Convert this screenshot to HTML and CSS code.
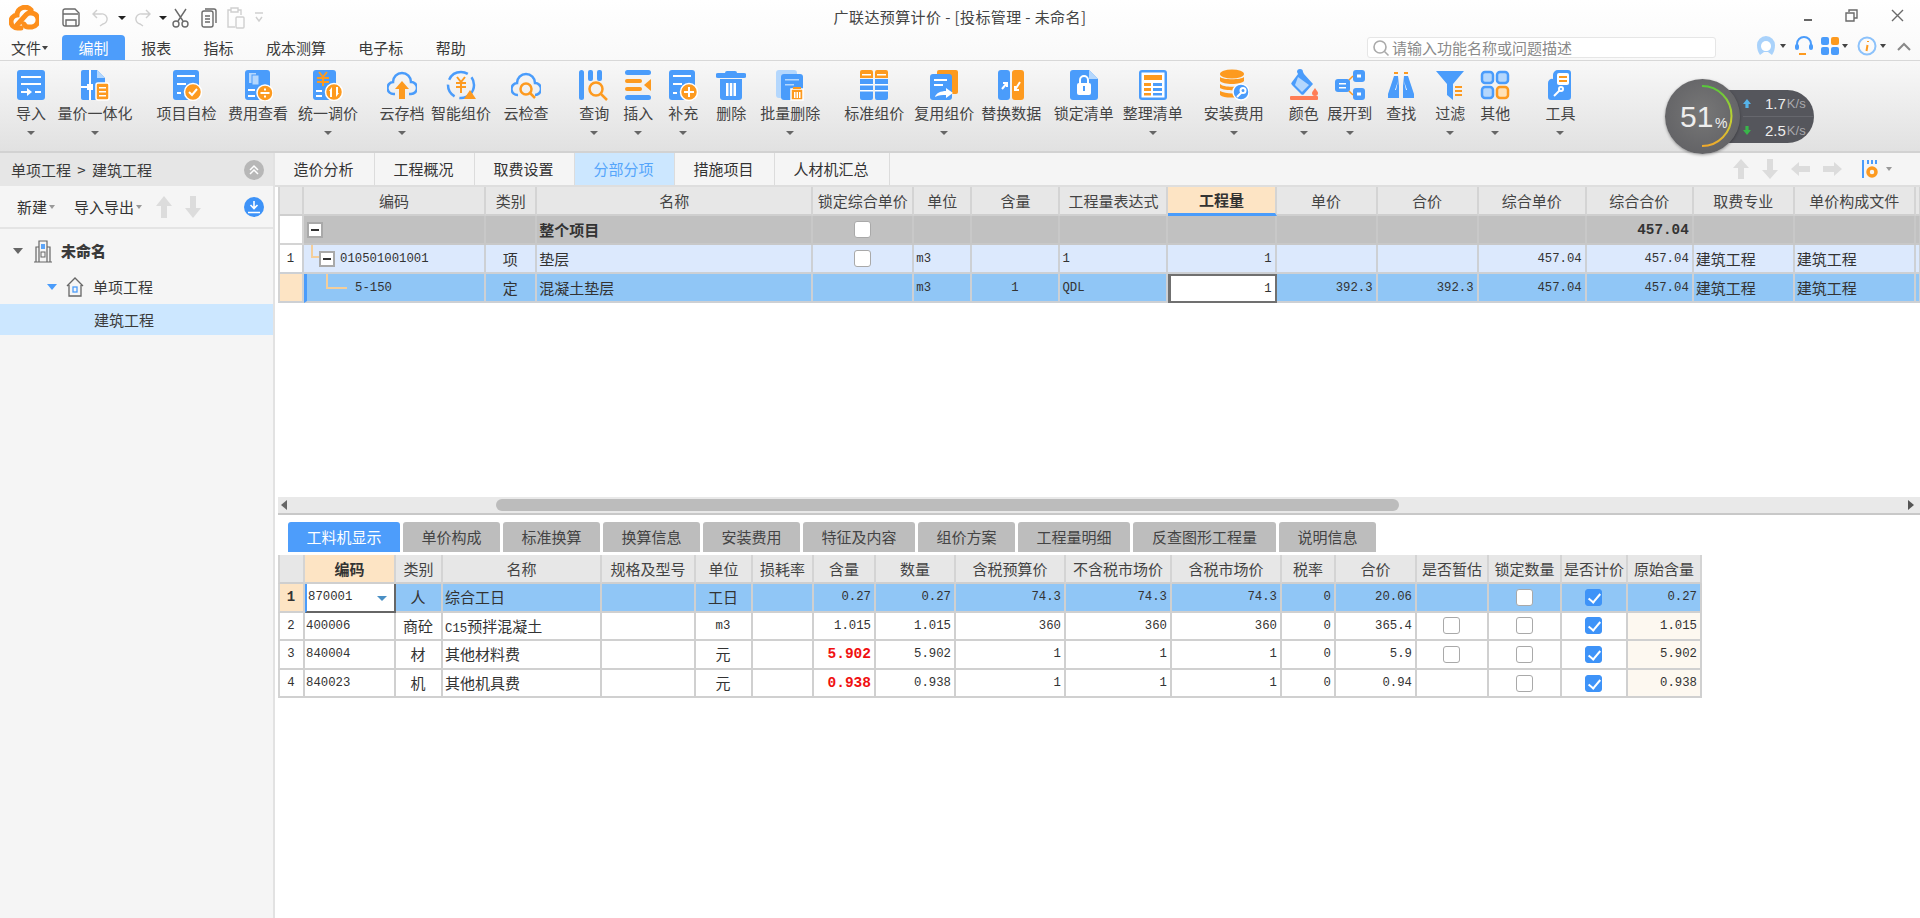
FILE: index.html
```html
<!DOCTYPE html>
<html lang="zh-CN">
<head>
<meta charset="utf-8">
<title>广联达预算计价</title>
<link rel="stylesheet" href="styles.css">
</head>
<body>
<div class="app">
  <header class="top">
    <div class="titlebar">
      <div class="qa">
        <svg class="logo" width="30" height="26" viewBox="0 0 30 26"><path class="lg" d="M12 23H9a6.500 6.500 0 0 1-1-13 8 8 0 0 1 14-5"/><path class="lg" d="M8 20l9-10a5 5 0 0 1 4-2 7 7 0 0 1 2 14h-3a5 5 0 0 1-5-3"/></svg>
        <svg class="qi s1" width="18" height="19" viewBox="0 0 18 19"><path class="ql" d="M3 1h10l4 4v11a2 2 0 0 1-2 2H3a2 2 0 0 1-2-2V3a2 2 0 0 1 2-2z"/><path class="ql" d="M4 18v-6h10v6M1 6h15"/></svg>
        <svg class="qi s2" width="16" height="18" viewBox="0 0 16 18"><path class="qd" d="M5 1L1 5l4 4M1 5h8a5 5 0 0 1 2 10l-3 2"/></svg>
        <i class="mini s3"></i>
        <svg class="qi s4" width="16" height="18" viewBox="0 0 16 18"><path class="qd" d="M11 1l4 4-4 4M15 5H7a5 5 0 0 0-2 10l3 2"/></svg>
        <i class="mini s5"></i>
        <svg class="qi s6" width="17" height="20" viewBox="0 0 17 20"><path class="ql" d="M3 1l8 12M14 1L6 13"/><circle class="ql" cx="4" cy="16" r="3"/><circle class="ql" cx="13" cy="16" r="3"/></svg>
        <svg class="qi s7" width="16" height="20" viewBox="0 0 16 20"><rect class="ql" x="1" y="3" width="11" height="16" rx="2"/><path class="ql" d="M4 1h9a2 2 0 0 1 2 2v12M4 8h5M4 11h5M4 14h5"/></svg>
        <svg class="qi s8" width="20" height="22" viewBox="0 0 20 22"><path class="qd" d="M5 3H2v17h7M12 3h3v5M5 1h7v4H5z"/><rect class="qd" x="10" y="10" width="8" height="11" rx="1"/></svg>
        <svg class="qi s9" width="10" height="14" viewBox="0 0 10 14"><path class="qd" d="M1 2h8M2 6l3 4 3-4"/></svg>
      </div>
      <div class="apptitle">广联达预算计价 - [投标管理 - 未命名]</div>
      <div class="winctl">
        <i class="w-min"></i>
        <svg width="13" height="13" viewBox="0 0 13 13"><path class="ql" d="M4 3V1h8v8h-3M1 4h8v8H1z"/></svg>
        <svg width="13" height="13" viewBox="0 0 13 13"><path class="ql" d="M1 1l11 11M12 1L1 12"/></svg>
      </div>
    </div>
    <nav class="menubar">
      <span class="mi file">文件<i class="mini dark"></i></span>
      <span class="mi active">编制</span>
      <span class="mi">报表</span>
      <span class="mi">指标</span>
      <span class="mi">成本测算</span>
      <span class="mi">电子标</span>
      <span class="mi">帮助</span>
      <div class="search">
        <svg width="18" height="18" viewBox="0 0 18 18"><circle cx="8" cy="8" r="6" fill="none" stroke="#aaa" stroke-width="1.6"/><path d="M12.5 12.5l4 4" stroke="#aaa" stroke-width="1.6"/></svg>
        <span>请输入功能名称或问题描述</span>
      </div>
      <div class="helpicons">
        <svg width="22" height="22" viewBox="0 0 22 22"><path d="M11 1a9 9 0 0 1 9 9c0 4-1 7-3 10l-4-3h-4l-4 3C3 17 2 14 2 10a9 9 0 0 1 9-9z" fill="#a9d2fb"/><path d="M6 11a5 5 0 0 1 10 0c0 3-2 5-5 5s-5-2-5-5z" fill="#fff"/></svg>
        <i class="mini dark"></i>
        <svg class="h2" width="20" height="22" viewBox="0 0 20 22"><path d="M3 12V9a7 7 0 0 1 14 0v3" fill="none" stroke="#4a9cfb" stroke-width="2"/><rect x="1" y="9" width="4" height="6" rx="2" fill="#4a9cfb"/><rect x="15" y="9" width="4" height="6" rx="2" fill="#4a9cfb"/><path d="M5 19h7" stroke="#fd9a1f" stroke-width="2"/></svg>
        <svg class="h3" width="18" height="18" viewBox="0 0 18 18"><rect x="0" y="0" width="8" height="8" rx="2" fill="#4a9cfb"/><rect x="10" y="0" width="8" height="8" rx="2" fill="#fd9a1f"/><rect x="0" y="10" width="8" height="8" rx="2" fill="#4a9cfb"/><rect x="10" y="10" width="8" height="8" rx="2" fill="#4a9cfb"/></svg>
        <i class="mini dark"></i>
        <svg class="h4" width="20" height="20" viewBox="0 0 20 20"><circle cx="10" cy="10" r="8.5" fill="none" stroke="#8cc2fb" stroke-width="2"/><path d="M11 5v1M10.500 9l-1 6" stroke="#fd9a1f" stroke-width="2"/></svg>
        <i class="mini dark"></i>
        <svg class="h5" width="14" height="9" viewBox="0 0 14 9"><path d="M1 8l6-6 6 6" fill="none" stroke="#888" stroke-width="2"/></svg>
      </div>
    </nav>
  </header>

  <section class="ribbon">
    <div class="rb g16"><svg class="ic" viewBox="0 0 30 32"><rect class="b" x="1" y="1" width="28" height="30" rx="3"/><path class="w" d="M5 7h20v2H5zM5 14h20v2H5zM5 22h6v-3l5 4-5 4v-3H5zM19 22h6v2h-6z"/></svg><span class="rl">导入</span><i class="cr"></i></div>
    <div class="rb g12"><svg class="ic" viewBox="0 0 30 32"><path class="b" d="M3 1h14l8 8v22H3a2 2 0 0 1-2-2V3a2 2 0 0 1 2-2z"/><path class="lb" d="M17 1l8 8h-8z"/><path class="w" d="M9 1h2v14H9zM9 21h2v10H9zM1 17h6v2H1z"/><rect class="w" x="7" y="15" width="6" height="6"/><rect class="o ow" x="16" y="14" width="13" height="17" rx="2"/><path class="w" d="M19 18h7v1.500h-7zM19 22h7v1.500h-7zM19 26h7v1.500h-7z"/></svg><span class="rl">量价一体化</span><i class="cr"></i></div>
    <div class="rb g24"><svg class="ic" viewBox="0 0 30 32"><rect class="b" x="1" y="1" width="26" height="30" rx="3"/><path class="w" d="M5 6h18v2H5zM5 14h9v2H5zM5 23h4v2H5z"/><circle class="o ow" cx="21" cy="23" r="8.500"/><path class="sw" d="M17 23l3 3 5-6"/></svg><span class="rl">项目自检</span></div>
    <div class="rb g12"><svg class="ic" viewBox="0 0 30 32"><rect class="b" x="2" y="1" width="25" height="30" rx="3"/><rect class="lb" x="6" y="4" width="7" height="10"/><rect class="lb ow1" x="9" y="6" width="7" height="10"/><path class="w" d="M5 20h7v2H5zM5 26h7v2H5z"/><circle class="o ow" cx="22" cy="24" r="8"/><path class="w" d="M17.500 23h9v2h-9zM21 19.500h2v2h-2zM21 26.500h2v2h-2z"/></svg><span class="rl">费用查看</span></div>
    <div class="rb g10"><svg class="ic" viewBox="0 0 30 32"><rect class="b" x="0" y="1" width="23" height="30" rx="3"/><path class="so thin" d="M6 3l4 5 4-5M4 9h12M4 13h12M10 8v9"/><path class="w" d="M3 21h6v2H3zM3 26h6v2H3z"/><circle class="o ow" cx="21" cy="23" r="8.500"/><path class="w" d="M19 18v10h-2v-6h-1zM23 28V18h2v6h1z"/></svg><span class="rl">统一调价</span><i class="cr"></i></div>
    <div class="rb g22"><svg class="ic" viewBox="0 0 30 32"><path class="sb" d="M8 25H7a6 6 0 0 1-1-12 9 9 0 0 1 18 0 6 6 0 0 1 0 12h-2"/><path class="o" d="M15 12l7 8h-4v10h-6V20H8z"/></svg><span class="rl">云存档</span><i class="cr"></i></div>
    <div class="rb g6"><svg class="ic" viewBox="0 0 30 32"><circle class="sb dash" cx="15" cy="16" r="13"/><path class="so thin" d="M11 8l4 5 4-5M10 14h10M10 18h10M15 13v11"/><path class="o" d="M24 21l6 9H18z"/></svg><span class="rl">智能组价</span></div>
    <div class="rb g13"><svg class="ic" viewBox="0 0 30 32"><path class="sb" d="M7 26a6 6 0 0 1-1-12 9 9 0 0 1 18 0 6 6 0 0 1 0 12"/><circle class="so" cx="15" cy="20" r="5.500"/><path class="so" d="M19 24l5 5"/></svg><span class="rl">云检查</span></div>
    <div class="rb g30"><svg class="ic" viewBox="0 0 30 32"><rect class="b" x="0" y="1" width="5" height="30" rx="2.500"/><rect class="b" x="9" y="1" width="5" height="11" rx="2"/><rect class="b" x="18" y="1" width="5" height="11" rx="2"/><circle class="so" cx="17" cy="20" r="6.500"/><path class="so" d="M22 25l6 6"/></svg><span class="rl">查询</span><i class="cr"></i></div>
    <div class="rb g14"><svg class="ic" viewBox="0 0 30 32"><rect class="b" x="2" y="1" width="26" height="5" rx="2.500"/><rect class="o" x="2" y="10" width="17" height="4" rx="2"/><rect class="o" x="2" y="18" width="17" height="4" rx="2"/><path class="o" d="M28 10v12l-7-6z"/><rect class="b" x="2" y="26" width="26" height="5" rx="2.500"/></svg><span class="rl">插入</span><i class="cr"></i></div>
    <div class="rb g15"><svg class="ic" viewBox="0 0 30 32"><rect class="b" x="1" y="1" width="26" height="30" rx="3"/><path class="w" d="M5 6h18v2H5zM5 14h9v2H5zM5 23h4v2H5z"/><circle class="o ow" cx="21" cy="23" r="8.500"/><path class="w" d="M20 18h2v4h4v2h-4v4h-2v-4h-4v-2h4z"/></svg><span class="rl">补充</span><i class="cr"></i></div>
    <div class="rb g18"><svg class="ic" viewBox="0 0 30 32"><path class="b" d="M11 2h8a2 2 0 0 1 2 2h7a1.500 1.500 0 0 1 0 5H2a1.500 1.500 0 0 1 0-5h7a2 2 0 0 1 2-2z"/><path class="b" d="M4 10h22v18a3 3 0 0 1-3 3H7a3 3 0 0 1-3-3z"/><path class="w" d="M10 14h2.500v13H10zM13.800 14h2.500v13h-2.500zM17.500 14H20v13h-2.500z"/></svg><span class="rl">删除</span></div>
    <div class="rb g14"><svg class="ic" viewBox="0 0 30 32"><rect class="lb" x="1" y="1" width="21" height="28" rx="3"/><path class="b" d="M9 5h16a3 3 0 0 1 3 3v23H9a3 3 0 0 1-3-3V8a3 3 0 0 1 3-3z"/><path class="lb" d="M10 10h14v1.500H10zM10 15h9v1.500h-9z"/><path class="o ow" d="M16 20h12v11H16z"/><path class="o" d="M18 18h8v2h-8z"/><path class="w" d="M19 23h1.500v6H19zM21.500 23H23v6h-1.500zM24 23h1.500v6H24z"/></svg><span class="rl">批量删除</span><i class="cr"></i></div>
    <div class="rb g24"><svg class="ic" viewBox="0 0 30 32"><path class="o" d="M3 1h9a2 2 0 0 1 2 2v6H1V3a2 2 0 0 1 2-2zM18 1h9a2 2 0 0 1 2 2v6H16V3a2 2 0 0 1 2-2z"/><path class="b" d="M1 10h13v19a2 2 0 0 1-2 2H3a2 2 0 0 1-2-2zM16 10h13v19a2 2 0 0 1-2 2h-9a2 2 0 0 1-2-2z"/><path class="w" d="M3 5h9v1.500H3zM18 5h9v1.500h-9zM1 15h13v1.500H1zM16 15h13v1.500H16zM1 21h13v1.500H1zM16 21h13v1.500H16z"/></svg><span class="rl">标准组价</span></div>
    <div class="rb g10"><svg class="ic" viewBox="0 0 30 32"><rect class="o" x="8" y="1" width="21" height="24" rx="2"/><rect class="b" x="1" y="5" width="22" height="26" rx="3"/><path class="w" d="M5 10h13v2H5zM5 15h9v2H5z"/><path class="w" d="M6 28c1-4 6-6 11-6v-3l7 5-7 5v-3c-4 0-7 0-11 2z"/></svg><span class="rl">复用组价</span><i class="cr"></i></div>
    <div class="rb g7"><svg class="ic" viewBox="0 0 30 32"><rect class="b" x="2" y="1" width="12" height="30" rx="3"/><rect class="o" x="16" y="1" width="12" height="30" rx="3"/><path class="sw" d="M6 20l5-6M7 14h4v4"/><path class="sw" d="M24 13l-5 8M23 21h-4v-4"/></svg><span class="rl">替换数据</span></div>
    <div class="rb g13"><svg class="ic" viewBox="0 0 30 32"><path class="b" d="M4 1h16l9 9v18a3 3 0 0 1-3 3H4a3 3 0 0 1-3-3V4a3 3 0 0 1 3-3z"/><path class="lb" d="M20 1l9 9h-9z"/><rect class="w" x="8" y="14" width="14" height="12" rx="2"/><path class="sw" d="M11 14v-3a4 4 0 0 1 8 0v3"/><rect class="b" x="14" y="17" width="2" height="5"/></svg><span class="rl">锁定清单</span></div>
    <div class="rb g9"><svg class="ic" viewBox="0 0 30 32"><rect class="b" x="1" y="1" width="28" height="30" rx="3"/><rect class="w" x="3.500" y="3.500" width="23" height="25"/><rect class="o" x="6" y="6" width="18" height="5"/><path class="o" d="M6 14h7v3H6zM6 19h7v3H6zM6 24h7v2.500H6z"/><path class="b" d="M15 14h9v3h-9zM15 19h9v3h-9zM15 24h9v2.500h-9z"/></svg><span class="rl">整理清单</span><i class="cr"></i></div>
    <div class="rb g21"><svg class="ic" viewBox="0 0 30 32"><ellipse class="o" cx="13" cy="5" rx="12" ry="4.500"/><path class="o" d="M1 8c3 3 21 3 24 0v4c-3 4-21 4-24 0zM1 15c3 3 16 4 20 1l-1 5c-6 1-16 0-19-2zM1 22c4 2 11 3 17 2l2 4c-7 1-16 1-19-2z"/><circle class="b ow" cx="22" cy="23" r="8"/><path class="sw" d="M18 28l5-5"/><circle class="sw" cx="24" cy="21.500" r="2.500"/></svg><span class="rl">安装费用</span><i class="cr"></i></div>
    <div class="rb g25"><svg class="ic" viewBox="0 0 30 32"><path class="b" d="M9 5l-1-2a3 3 0 0 1 6 0l1 2 9 10-9 10a2 2 0 0 1-3 0L3 16a2 2 0 0 1 0-3z"/><path class="lb" d="M9 8l11 8-7 7-7-7z"/><path class="rd" d="M26 19c2 3 3 4 3 5a3 3 0 0 1-6 0c0-1 1-2 3-5z"/><rect class="rd" x="1" y="27" width="28" height="4" rx="1"/></svg><span class="rl">颜色</span><i class="cr"></i></div>
    <div class="rb g8"><svg class="ic" viewBox="0 0 30 32"><rect class="b" x="0" y="10" width="15" height="13" rx="3"/><path class="w" d="M4 14h7v1.500H4zM4 18h7v1.500H4z"/><rect class="b" x="18" y="1" width="12" height="12" rx="3"/><rect class="b" x="18" y="19" width="12" height="12" rx="3"/><rect class="w" x="22" y="5.500" width="4" height="3"/><rect class="w" x="22" y="23.500" width="4" height="3"/><path class="so th" d="M14 11l4-4M14 22l4 4"/></svg><span class="rl">展开到</span><i class="cr"></i></div>
    <div class="rb g14"><svg class="ic" viewBox="0 0 30 32"><path class="o" d="M8 3h4v2H8zM18 3h4v2h-4z"/><path class="b" d="M8 7h4l1 10v12H2v-4zM18 7h4l6 18v4H17V17z"/><path class="w" d="M12 12l-2 9h-1zM18 12l2 9h1z"/></svg><span class="rl">查找</span></div>
    <div class="rb g19"><svg class="ic" viewBox="0 0 30 32"><path class="b" d="M1 2h28L18 15v16l-6-5V15z"/><path class="o" d="M20 17h7v2h-7zM20 21h7v2h-7zM20 25h7v2h-7z"/></svg><span class="rl">过滤</span><i class="cr"></i></div>
    <div class="rb g15"><svg class="ic" viewBox="0 0 30 32"><rect class="lb sb2" x="2" y="3" width="11" height="11" rx="3"/><rect class="lb sb2" x="17" y="3" width="11" height="11" rx="3"/><rect class="lb sb2" x="2" y="18" width="11" height="11" rx="3"/><rect class="lo so2" x="17" y="18" width="11" height="11" rx="3"/></svg><span class="rl">其他</span><i class="cr"></i></div>
    <div class="rb g35"><svg class="ic" viewBox="0 0 30 32"><path class="b" d="M8 6a5 5 0 0 1 5-5h10a3 3 0 0 1 3 3v24a3 3 0 0 1-3 3H6a3 3 0 0 1-3-3V14a4 4 0 0 1 5-4z"/><rect class="w" x="12" y="4" width="12" height="12" rx="2"/><path class="o" d="M14 7h8v2h-8zM14 11h8v2h-8z"/><path class="sw" d="M9 27l6-6"/><circle class="sw" cx="16" cy="20" r="2"/></svg><span class="rl">工具</span><i class="cr"></i></div>

    <div class="speed">
      <div class="pill">
        <div class="sp-row"><svg width="8" height="9" viewBox="0 0 10 11"><path d="M5 0l5 6H7v5H3V6H0z" fill="#56b4ea"/></svg><b>1.7</b><em>K/s</em></div>
        <div class="sp-row"><svg width="8" height="9" viewBox="0 0 10 11"><path d="M5 11L0 5h3V0h4v5h3z" fill="#39b54a"/></svg><b>2.5</b><em>K/s</em></div>
      </div>
      <div class="dial">
        <svg class="arc" width="74" height="74" viewBox="0 0 74 74"><defs><linearGradient id="ga" x1="0" y1="0" x2="0" y2="1"><stop offset="0" stop-color="#57c83a"/><stop offset=".55" stop-color="#c4d232"/><stop offset="1" stop-color="#efa92c"/></linearGradient></defs><path d="M37 7a29.500 30 0 0 1 0 60" fill="none" stroke="url(#ga)" stroke-width="2"/></svg>
        <span class="pct">51</span><span class="pc">%</span>
      </div>
    </div>
  </section>

  <div class="main">
    <aside class="side">
      <div class="side-head"><span class="crumb">单项工程 &gt; 建筑工程</span><span class="circ grey"><svg width="12" height="12" viewBox="0 0 12 12"><path d="M2 6l4-4 4 4M2 10l4-4 4 4" fill="none" stroke="#fff" stroke-width="1.500"/></svg></span></div>
      <div class="side-tools">
        <span class="st">新建<i class="mini grey-m"></i></span>
        <span class="st st2">导入导出<i class="mini grey-m"></i></span>
        <svg class="arrow a1" width="16" height="22" viewBox="0 0 16 22"><path class="lt" d="M8 0l8 10h-5v12H5V10H0z"/></svg>
        <svg class="arrow a2" width="16" height="22" viewBox="0 0 16 22"><path class="lt" d="M8 22L0 12h5V0h6v12h5z"/></svg>
        <span class="circ blue"><svg width="14" height="14" viewBox="0 0 14 14"><path d="M7 1v7M3.500 5L7 8.500 10.500 5M1 12.500h12" fill="none" stroke="#fff" stroke-width="1.600"/></svg></span>
      </div>
      <div class="tree">
        <div class="tn root"><i class="tri dk"></i><svg width="20" height="24" viewBox="0 0 20 24"><path d="M1 23h18M3 23V8h3M17 23V8h-3M6 23V2h8v21" fill="none" stroke="#666" stroke-width="1.200"/><rect x="8" y="5" width="4" height="5" fill="#5ba4f8"/><rect x="8" y="13" width="4" height="5" fill="none" stroke="#666"/></svg><b>未命名</b></div>
        <div class="tn lvl1"><i class="tri bl"></i><svg width="18" height="20" viewBox="0 0 18 20"><path d="M1 9l8-8 8 8M3 8v11h12V8" fill="none" stroke="#666" stroke-width="1.300"/><rect x="7" y="10" width="4" height="5" fill="none" stroke="#4a9cfb" stroke-width="1.300"/></svg><span>单项工程</span></div>
        <div class="tn lvl2"><span>建筑工程</span></div>
      </div>
    </aside>

    <div class="content">
      <div class="tabs">
        <span class="tab">造价分析</span><span class="tab">工程概况</span><span class="tab">取费设置</span><span class="tab on">分部分项</span><span class="tab">措施项目</span><span class="tab wide">人材机汇总</span>
        <div class="tab-tools">
          <svg width="16" height="20" viewBox="0 0 16 20"><path class="lt" d="M8 0l8 9h-5v11H5V9H0z"/></svg>
          <svg width="16" height="20" viewBox="0 0 16 20"><path class="lt" d="M8 20L0 11h5V0h6v11h5z"/></svg>
          <svg width="19" height="14" viewBox="0 0 19 14"><path class="lt" d="M0 7l8-7v4h11v6H8v4z"/></svg>
          <svg width="19" height="14" viewBox="0 0 19 14"><path class="lt" d="M19 7l-8-7v4H0v6h11v4z"/></svg>
          <svg class="gear" width="20" height="20" viewBox="0 0 20 20"><path d="M1 1h2v18H1z" fill="#4a9cfb"/><path d="M6 1h2v4H6zM10 1h2v4h-2zM14 1h2v4h-2z" fill="#4a9cfb"/><circle cx="11" cy="13" r="4" fill="none" stroke="#fd9a1f" stroke-width="3.500"/></svg>
          <i class="mini grey-m"></i>
        </div>
      </div>

      <div class="upper">
        <table class="grid gt">
          <colgroup><col class="c26"><col class="c182"><col class="c51"><col class="c276"><col class="c101"><col class="c58"><col class="c88"><col class="c108"><col class="c108"><col class="c101"><col class="c101"><col class="c108"><col class="c107"><col class="c101"><col class="c121"><col class="c5"></colgroup>
          <thead><tr><th></th><th>编码</th><th>类别</th><th>名称</th><th>锁定综合单价</th><th>单位</th><th>含量</th><th>工程量表达式</th><th class="hot line">工程量</th><th>单价</th><th>合价</th><th>综合单价</th><th>综合合价</th><th>取费专业</th><th>单价构成文件</th><th></th></tr></thead>
          <tbody>
            <tr class="r-all"><td class="no"></td><td><span class="treecell"><i class="box"></i></span></td><td></td><td class="t"><b>整个项目</b></td><td class="ctr"><i class="chk"></i></td><td></td><td></td><td></td><td></td><td></td><td></td><td></td><td class="num bold">457.04</td><td></td><td></td><td></td></tr>
            <tr class="r-item"><td class="no">1</td><td><span class="treecell l1"><i class="link lk1"></i><i class="box"></i>010501001001</span></td><td class="ctr t">项</td><td class="t">垫层</td><td class="ctr"><i class="chk"></i></td><td>m3</td><td></td><td>1</td><td class="num">1</td><td></td><td></td><td class="num">457.04</td><td class="num">457.04</td><td class="t">建筑工程</td><td class="t">建筑工程</td><td></td></tr>
            <tr class="r-sel"><td class="no cur"></td><td class="mark"><span class="treecell l2"><i class="link lk2"></i>5-150</span></td><td class="ctr t">定</td><td class="t">混凝土垫层</td><td></td><td>m3</td><td class="ctr">1</td><td>QDL</td><td class="num edit">1</td><td class="num">392.3</td><td class="num">392.3</td><td class="num">457.04</td><td class="num">457.04</td><td class="t">建筑工程</td><td class="t">建筑工程</td><td></td></tr>
          </tbody>
        </table>
      </div>
      <div class="hscroll"><i class="sa left"></i><div class="thumb"></div><i class="sa right"></i></div>

      <div class="lower">
        <div class="btabs">
          <span class="bt on w112">工料机显示</span><span class="bt">单价构成</span><span class="bt">标准换算</span><span class="bt">换算信息</span><span class="bt">安装费用</span><span class="bt w112">特征及内容</span><span class="bt">组价方案</span><span class="bt w112">工程量明细</span><span class="bt w143">反查图形工程量</span><span class="bt">说明信息</span>
        </div>
        <table class="grid gb">
          <colgroup><col class="c27"><col class="c91"><col class="c47"><col class="c159"><col class="c94"><col class="c57"><col class="c61"><col class="c62"><col class="c80"><col class="c110"><col class="c106"><col class="c110"><col class="c54"><col class="c81"><col class="c72"><col class="c73"><col class="c66"><col class="c74"></colgroup>
          <thead><tr><th></th><th class="hot">编码</th><th>类别</th><th>名称</th><th>规格及型号</th><th>单位</th><th>损耗率</th><th>含量</th><th>数量</th><th>含税预算价</th><th>不含税市场价</th><th>含税市场价</th><th>税率</th><th>合价</th><th>是否暂估</th><th>锁定数量</th><th>是否计价</th><th>原始含量</th></tr></thead>
          <tbody>
            <tr class="r-sel"><td class="no cur strong">1</td><td class="edit2">870001<i class="dd"></i></td><td class="ctr t">人</td><td class="t">综合工日</td><td></td><td class="ctr t">工日</td><td></td><td class="num">0.27</td><td class="num">0.27</td><td class="num">74.3</td><td class="num">74.3</td><td class="num">74.3</td><td class="num">0</td><td class="num">20.06</td><td></td><td class="ctr"><i class="chk"></i></td><td class="ctr"><i class="chk on"></i></td><td class="num">0.27</td></tr>
            <tr><td class="no">2</td><td>400006</td><td class="ctr t">商砼</td><td class="t"><span class="m">C15</span>预拌混凝土</td><td></td><td class="ctr">m3</td><td></td><td class="num">1.015</td><td class="num">1.015</td><td class="num">360</td><td class="num">360</td><td class="num">360</td><td class="num">0</td><td class="num">365.4</td><td class="ctr"><i class="chk"></i></td><td class="ctr"><i class="chk"></i></td><td class="ctr"><i class="chk on"></i></td><td class="num cream">1.015</td></tr>
            <tr><td class="no">3</td><td>840004</td><td class="ctr t">材</td><td class="t">其他材料费</td><td></td><td class="ctr t">元</td><td></td><td class="num red">5.902</td><td class="num">5.902</td><td class="num">1</td><td class="num">1</td><td class="num">1</td><td class="num">0</td><td class="num">5.9</td><td class="ctr"><i class="chk"></i></td><td class="ctr"><i class="chk"></i></td><td class="ctr"><i class="chk on"></i></td><td class="num cream">5.902</td></tr>
            <tr><td class="no">4</td><td>840023</td><td class="ctr t">机</td><td class="t">其他机具费</td><td></td><td class="ctr t">元</td><td></td><td class="num red">0.938</td><td class="num">0.938</td><td class="num">1</td><td class="num">1</td><td class="num">1</td><td class="num">0</td><td class="num">0.94</td><td></td><td class="ctr"><i class="chk"></i></td><td class="ctr"><i class="chk on"></i></td><td class="num cream">0.938</td></tr>
          </tbody>
        </table>
      </div>
    </div>
  </div>
</div>
</body>
</html>
```

FILE: styles.css
```css
* { box-sizing: border-box; }
html, body { margin: 0; padding: 0; height: 100%; overflow: hidden; }
body { font: 15px/20px "Noto Sans CJK SC", "Noto Sans", sans-serif; color: #3a3a3a; background: #fff; }
i { display: block; font-style: normal; }
.app { width: 1920px; height: 918px; display: flex; flex-direction: column; overflow: hidden; }

/* title and menu */
.top { height: 61px; background: linear-gradient(#fff, #f9f9f9); border-bottom: 1px solid #d8d8d8; flex: none; }
.titlebar { height: 35px; display: grid; grid-template-columns: 1fr auto 1fr; align-items: center; }
.qa { display: flex; align-items: center; height: 35px; padding-left: 9px; }
.lg { fill: none; stroke: #fd8f1c; stroke-width: 5; stroke-linecap: round; }
.ql, .qd { fill: none; stroke-width: 1.4; }
.ql { stroke: #6a6a6a; }
.qd { stroke: #cfcfcf; }
.s1 { margin-left: 23px; }
.s2 { margin-left: 12px; }
.s3 { margin-left: 10px; }
.s4 { margin-left: 9px; }
.s5 { margin-left: 8px; }
.s6 { margin-left: 5px; }
.s7 { margin-left: 12px; }
.s8 { margin-left: 9px; }
.s9 { margin-left: 8px; }
.mini { width: 0; height: 0; border-left: 4px solid transparent; border-right: 4px solid transparent; border-top: 4px solid #222; }
.mini.dark { border-left-width: 3px; border-right-width: 3px; border-top-color: #444; }
.mini.grey-m { border-left-width: 3px; border-right-width: 3px; border-top-color: #999; }
.apptitle { font-size: 15px; text-align: center; color: #444; letter-spacing: .4px; padding-bottom: 2px; }
.winctl { display: flex; justify-content: flex-end; align-items: center; gap: 33px; padding-right: 16px; padding-bottom: 4px; }
.w-min { width: 8px; height: 2px; background: #666; margin-top: 8px; }

.menubar { height: 25px; display: flex; align-items: center; padding-left: 11px; }
.mi { display: flex; align-items: center; height: 25px; padding: 0 16.2px; white-space: nowrap; }
.mi.file { padding: 0; gap: 1px; width: 51px; }
.mi.active { width: 63px; justify-content: center; padding: 0; background: #4d9dfb; color: #fff; border-radius: 4px 4px 0 0; }
.search { margin-left: auto; width: 349px; height: 21px; background: #fff; border: 1px solid #e6e6e6; border-radius: 3px; display: flex; align-items: center; padding-left: 4px; gap: 2px; color: #8a8a8a; font-size: 15px; margin-right: 39px; }
.helpicons { display: flex; align-items: center; width: 165px; padding-bottom: 3px; flex: none; }
.helpicons > i { margin-left: 3px; }
.h2 { margin-left: 8px; }
.h3 { margin-left: 7px; }
.h4 { margin-left: 9px; }
.h5 { margin-left: 11px; }

/* ribbon */
.ribbon { position: relative; height: 92px; flex: none; display: flex; padding-top: 8px; background: linear-gradient(#f8f8f8, #e1e1e1); border-bottom: 2px solid #d2d2d2; }
.rb { display: flex; flex-direction: column; align-items: center; flex: none; }
.ic { width: 30px; height: 32px; display: block; flex: none; }
.rl { display: block; white-space: nowrap; margin-top: 2px; color: #444; font-size: 15px; line-height: 20px; }
.cr { width: 0; height: 0; margin-top: 8px; border-left: 4px solid transparent; border-right: 4px solid transparent; border-top: 4px solid #666; }
.g6 { margin-left: 6.5px; } .g7 { margin-left: 7px; } .g8 { margin-left: 8.5px; } .g9 { margin-left: 9px; }
.g10 { margin-left: 10px; } .g12 { margin-left: 11.5px; } .g13 { margin-left: 12.5px; } .g14 { margin-left: 14px; }
.g15 { margin-left: 15px; } .g16 { margin-left: 16px; } .g18 { margin-left: 18px; } .g19 { margin-left: 19px; }
.g21 { margin-left: 21px; } .g22 { margin-left: 21.5px; } .g24 { margin-left: 24px; } .g25 { margin-left: 25px; }
.g30 { margin-left: 30.5px; } .g35 { margin-left: 35px; }
.b { fill: #4a9cfb; } .o { fill: #fd9a1f; } .w { fill: #fff; } .lb { fill: #b4d7fd; } .rd { fill: #ff7d55; } .lo { fill: #ffe2b8; }
.ow { stroke: #fff; stroke-width: 1.5; }
.ow1 { stroke: #4a9cfb; stroke-width: 1; }
.sw { fill: none; stroke: #fff; stroke-width: 2; }
.so { fill: none; stroke: #fd9a1f; stroke-width: 2.5; }
.so.th { stroke-width: 1.5; }
.so.thin { stroke-width: 2; }
.sb { fill: none; stroke: #4a9cfb; stroke-width: 2.5; }
.sb.dash { stroke-dasharray: 22 5 14 5; }
.sb2 { stroke: #4a9cfb; stroke-width: 2.5; }
.so2 { stroke: #fd9a1f; stroke-width: 2.5; }

.speed { position: absolute; left: 1665px; top: 18px; width: 150px; height: 76px; z-index: 2; }
.pill { position: absolute; left: 30px; top: 11px; width: 119px; height: 53px; border-radius: 27px; background: #55565c; padding: 0 0 0 48px; display: flex; flex-direction: column; }
.sp-row { flex: 1; display: flex; align-items: center; font-size: 15px; color: #eee; }
.sp-row + .sp-row { border-top: 1px solid #66676d; }
.sp-row b { font: 15px "Liberation Sans", sans-serif; margin-left: 14px; }
.sp-row em { font: 13px "Liberation Sans", sans-serif; color: #a9a9ad; margin-left: 1px; }
.dial { position: absolute; left: 0; top: 0; width: 75px; height: 75px; border-radius: 50%; background: radial-gradient(circle at 50% 45%, #777, #636366 75%, #5c5c60); box-shadow: 0 1px 3px rgba(0,0,0,.35); color: #eee; }
.arc { position: absolute; left: 0; top: 0; }
.pct { position: absolute; left: 15px; top: 18px; font: 30px/40px "Liberation Sans", sans-serif; font-weight: 400; }
.pc { position: absolute; left: 50px; top: 34px; font: 14px/20px "Liberation Sans", sans-serif; }

/* main */
.main { flex: 1; display: flex; min-height: 0; }
.side { width: 275px; flex: none; background: #f5f5f5; border-right: 2px solid #e2e2e2; }
.side-head { height: 33px; background: #e6e6e6; display: flex; align-items: center; justify-content: space-between; padding: 0 9px 0 11px; }
.crumb { word-spacing: 3px; }
.circ { width: 20px; height: 20px; border-radius: 50%; display: flex; align-items: center; justify-content: center; }
.circ.grey { background: #b7b7b7; }
.circ.blue { background: #3e93f8; margin-left: auto; margin-right: 0; }
.side-tools { height: 42px; margin-top: 1px; display: flex; align-items: center; padding: 0 9px 0 17px; border-bottom: 2px solid #e4e4e4; }
.st { display: flex; align-items: center; gap: 2px; color: #333; }
.st2 { margin-left: 19px; }
.arrow { display: block; }
.a1 { margin-left: 14px; }
.a2 { margin-left: 13px; }
.lt { fill: #dcdcdc; }
.tree { padding-top: 4px; }
.tn { display: flex; align-items: center; }
.root { height: 36px; padding-left: 13px; gap: 10px; font-weight: 700; }
.root b { margin-left: -2px; }
.lvl1 { height: 35px; padding-left: 47px; gap: 9px; }
.lvl2 { height: 31px; padding-left: 94px; background: #cce7ff; }
.tri { width: 0; height: 0; border-left: 5px solid transparent; border-right: 5px solid transparent; border-top: 6px solid; }
.tri.dk { color: #666; }
.tri.bl { color: #4a9cfb; }

.content { flex: 1; min-width: 0; display: flex; flex-direction: column; background: #fff; }
.tabs { height: 34px; flex: none; display: flex; background: #f5f5f5; border-bottom: 2px solid #dedede; }
.tab { width: 100px; padding-right: 2px; border-right: 1px solid #dcdcdc; display: flex; align-items: center; justify-content: center; color: #333; }
.tab.wide { width: 115px; }
.tab.on { background: #cce7ff; color: #55a5fb; }
.tab-tools { margin-left: auto; display: flex; align-items: center; padding-right: 28px; gap: 13px; }
.gear { margin-left: 6px; }
.tab-tools .mini { margin-left: -8px; }

.upper { height: 310px; flex: none; padding-left: 3px; }
.grid { table-layout: fixed; border-collapse: separate; border-spacing: 0; font: 12.3px/16px "Liberation Mono", "Noto Sans CJK SC", monospace; color: #333; }
.gt { width: 1643px; }
.gb { width: 1424px; }
.grid th { height: 29px; padding: 0 2px; font: 400 15px/20px "Noto Sans CJK SC", sans-serif; background: #e7e7e7; color: #444; border-right: 2px solid #d4d4d4; border-bottom: 2px solid #cfcfcf; overflow: hidden; white-space: nowrap; }
.grid td { height: 29px; padding: 0 3px 0 2px; border-right: 2px solid #cdd0d4; border-bottom: 2px solid #cdd0d4; white-space: nowrap; overflow: hidden; }
.gb td { height: 28.6px; border-color: #d0d0d0; }
.gb td:nth-child(2) { padding-left: 1px; }
.grid tr > :first-child { border-left: 2px solid #d4d4d4; }
.grid .hot { background: #fde4c4; font-weight: 700; color: #333; }
.grid .hot.line { border-bottom: 3px solid #4a9cfb; }
.grid .t { font: 15px/20px "Noto Sans CJK SC", sans-serif; }
.grid .t b { font-weight: 700; }
.m { font: 12.3px "Liberation Mono", monospace; }
.no { text-align: center; background: #fff; }
.no.cur { background: #fde4c4; }
.no.strong { font-weight: 700; font-size: 14px; }
.num { text-align: right; }
.bold { font-weight: 700; font-size: 14.3px; }
.ctr { text-align: center; }
.red { color: #f01010; font-weight: 700; font-size: 14.5px; }
.cream { background: #fdf8f0; }
.r-all td { background: #c1c1c1; border-color: #c8c8c8; }
.r-all td.no { background: #fff; border-color: #d4d4d4; }
.r-item td { background: #dce9fd; }
.r-item td.no { background: #fff; }
.r-sel td { background: #90c6f6; }
.r-sel td.no { background: #fde4c4; }
.grid td.mark { border-left: 3px solid #4a9cfb; }
.grid .r-sel td.edit { background: #fff; border: 2px solid #707070; border-left-width: 3px; }
.grid .r-sel td.edit2 { background: #fff; position: relative; border-left: 2px solid #4a9cfb; border-right: 2px solid #666; border-bottom: 2px solid #666; }
.dd { position: absolute; right: 7px; top: 12px; width: 0; height: 0; border-left: 5px solid transparent; border-right: 5px solid transparent; border-top: 5px solid #4a8fc4; }
.treecell { position: relative; display: flex; align-items: center; gap: 5px; height: 20px; padding-left: 1px; }
.treecell.l1 { padding-left: 13px; }
.treecell.l2 { padding-left: 46px; }
.box { width: 16px; height: 16px; flex: none; border: 2px solid #a9a9a9; background: #fff; position: relative; z-index: 1; }
.box::after { content: ""; position: absolute; left: 2px; right: 2px; top: 5px; height: 2px; background: #333; }
.chk { display: inline-block; vertical-align: middle; width: 17px; height: 17px; border: 1px solid #a9a9a9; border-radius: 3px; background: #fff; position: relative; }
.chk.on { background: #3e93f8; border-color: #3e93f8; }
.chk.on::after { content: ""; position: absolute; left: 5px; top: 1px; width: 5px; height: 10px; border: solid #fff; border-width: 0 2px 2px 0; transform: rotate(40deg); }
.link { position: absolute; border-left: 2px solid #f4ce9a; border-bottom: 2px solid #f4ce9a; }
.lk1 { left: 5px; top: -12px; width: 8px; height: 21px; }
.lk2 { left: 17px; top: -12px; width: 21px; height: 23px; }

.hscroll { height: 18px; flex: none; display: flex; align-items: center; margin-left: 3px; background: #e9e9e9; border-bottom: 2px solid #c8c8c8; position: relative; }
.thumb { position: absolute; left: 218px; top: 2px; width: 903px; height: 12px; border-radius: 6px; background: #bcbcbc; }
.sa { position: absolute; top: 3px; width: 0; height: 0; border-top: 5px solid transparent; border-bottom: 5px solid transparent; }
.sa.left { left: 3px; border-right: 6px solid #666; }
.sa.right { right: 6px; border-left: 6px solid #555; }

.lower { padding: 7px 0 0 3px; }
.btabs { display: flex; height: 33px; padding-left: 10px; gap: 3px; }
.bt { width: 97px; height: 30px; display: flex; align-items: center; justify-content: center; background: #bdbdbd; border-radius: 3px 3px 0 0; color: #444; }
.bt.on { background: #4d9dfb; color: #fff; }
.w112 { width: 112px; }
.w143 { width: 143px; }

.c5 { width: 5px; } .c26 { width: 26px; } .c27 { width: 27px; } .c47 { width: 47px; } .c51 { width: 51px; } .c54 { width: 54px; }
.c57 { width: 57px; } .c58 { width: 58px; } .c61 { width: 61px; } .c62 { width: 62px; } .c66 { width: 66px; } .c72 { width: 72px; }
.c73 { width: 73px; } .c74 { width: 74px; } .c80 { width: 80px; } .c81 { width: 81px; } .c88 { width: 88px; } .c91 { width: 91px; }
.c94 { width: 94px; } .c101 { width: 101px; } .c106 { width: 106px; } .c107 { width: 107px; } .c108 { width: 108px; } .c110 { width: 110px; }
.c121 { width: 121px; } .c159 { width: 159px; } .c182 { width: 182px; } .c276 { width: 276px; }
```
